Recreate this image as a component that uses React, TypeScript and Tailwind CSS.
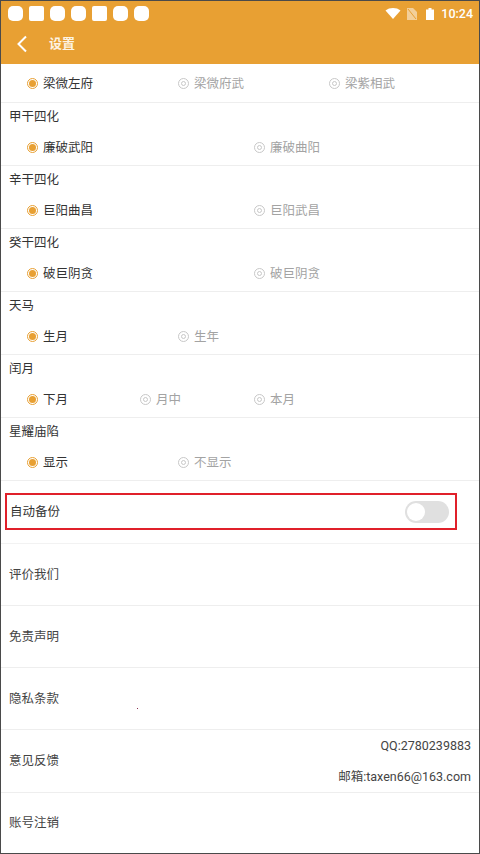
import React from "react";

function Radio({ label, on, w }: { label: string; on?: boolean; w: string }) {
  return (
    <div className={`flex items-center gap-[5px] shrink-0 ${w}`}>
      {on ? (
        <span className="flex items-center justify-center w-[11px] h-[11px] rounded-full border border-[#e8a033]">
          <span className="w-[7px] h-[7px] rounded-full bg-[#e8a033]" />
        </span>
      ) : (
        <span className="flex items-center justify-center w-[11px] h-[11px] rounded-full border border-[#c8c8c8]">
          <span className="w-[5px] h-[5px] rounded-full border border-[#c8c8c8]" />
        </span>
      )}
      <span className={`text-[12.5px] leading-[16px] pt-[2px] ${on ? "text-[#333333]" : "text-[#a3a3a3]"}`}>{label}</span>
    </div>
  );
}

function Options({ items }: { items: { l: string; w: string; on?: boolean }[] }) {
  return (
    <div className="flex items-center pl-[26px] h-[18px]">
      {items.map((i) => (
        <Radio key={i.l} label={i.l} on={i.on} w={i.w} />
      ))}
    </div>
  );
}

function Section({ title, items }: { title: string; items: { l: string; w: string; on?: boolean }[] }) {
  return (
    <div className="h-[63px] border-b border-[#eeeeee] flex flex-col">
      <div className="pl-[8px] pt-[6px] h-[35px] text-[12.5px] leading-[16px] text-[#333333]">{title}</div>
      <Options items={items} />
    </div>
  );
}

function Row({ title, tall, children }: { title: string; tall?: boolean; children?: React.ReactNode }) {
  return (
    <div className={`relative ${tall ? "h-[63px]" : "h-[62px]"} border-b border-[#eeeeee] flex items-center justify-between pl-[8px] pr-[8px]`}>
      <span className="text-[12.5px] leading-[16px] text-[#444444]">{title}</span>
      {children}
    </div>
  );
}

export default function App() {
  return (
    <div
      className="w-[480px] h-[854px] overflow-hidden bg-white flex flex-col border-x border-t border-b border-[#4a4a4a]"
      style={{ fontFamily: '"Roboto", "Noto Sans CJK SC", sans-serif' }}
    >
      <div className="h-[63px] shrink-0 bg-[#e8a033] flex flex-col">
        <div className="h-[22px] flex items-center justify-between pl-[7px] pr-[6px] pt-[3px]">
          <div className="flex items-center gap-[6px]">
            <span className="w-[15px] h-[15px] rounded-[5px] bg-white" />
            <span className="w-[15px] h-[15px] rounded-[2px] bg-white" />
            <span className="w-[15px] h-[15px] rounded-[5px] bg-white" />
            <span className="w-[15px] h-[15px] rounded-[5px] bg-white" />
            <span className="w-[15px] h-[15px] rounded-[2px] bg-white" />
            <span className="w-[15px] h-[15px] rounded-[5px] bg-white" />
            <span className="w-[15px] h-[15px] rounded-[5px] bg-white" />
          </div>
          <div className="flex items-center">
            <svg width="16" height="11" viewBox="0 0 15 11" className="mr-[6px]">
              <path d="M0 2.5C4 -0.8 11 -0.8 15 2.5L7.5 11Z" fill="#fff" />
            </svg>
            <svg width="10" height="12" viewBox="0 0 10 12" className="mr-[9px]">
              <path d="M0 0H6L10 4V12H0Z" fill="#f3cf99" />
              <path d="M1 1L9 11" stroke="#e8a033" strokeWidth="1" />
            </svg>
            <svg width="8" height="12" viewBox="0 0 8 12" className="mr-[7px]">
              <path d="M2.5 0H5.5V1.5H8V12H0V1.5H2.5Z" fill="#fff" />
            </svg>
            <span className="text-[12.5px] leading-[16px] font-medium text-white">10:24</span>
          </div>
        </div>
        <div className="flex-1 flex items-center pl-[15px]">
          <svg width="12" height="18" viewBox="0 0 12 18">
            <path d="M10 1.5L2.5 9L10 16.5" fill="none" stroke="#fff" strokeWidth="2" />
          </svg>
          <span className="ml-[21px] text-[13px] leading-[16px] font-bold text-[#fdf3e2]">设置</span>
        </div>
      </div>

      <div className="flex-1 flex flex-col">
        <div className="h-[39px] flex items-center border-b border-[#eeeeee]">
          <Options
            items={[
              { l: "梁微左府", w: "w-[151px]", on: true },
              { l: "梁微府武", w: "w-[151px]" },
              { l: "梁紫相武", w: "w-[100px]" },
            ]}
          />
        </div>
        <Section title="甲干四化" items={[{ l: "廉破武阳", w: "w-[227px]", on: true }, { l: "廉破曲阳", w: "w-[100px]" }]} />
        <Section title="辛干四化" items={[{ l: "巨阳曲昌", w: "w-[227px]", on: true }, { l: "巨阳武昌", w: "w-[100px]" }]} />
        <Section title="癸干四化" items={[{ l: "破巨阴贪", w: "w-[227px]", on: true }, { l: "破巨阴贪", w: "w-[100px]" }]} />
        <Section title="天马" items={[{ l: "生月", w: "w-[151px]", on: true }, { l: "生年", w: "w-[100px]" }]} />
        <Section
          title="闰月"
          items={[
            { l: "下月", w: "w-[113px]", on: true },
            { l: "月中", w: "w-[114px]" },
            { l: "本月", w: "w-[100px]" },
          ]}
        />
        <Section title="星耀庙陷" items={[{ l: "显示", w: "w-[151px]", on: true }, { l: "不显示", w: "w-[100px]" }]} />

        <div className="h-[63px] border-b border-[#f2f2f2] pl-[4px] pt-[12px]">
          <div className="w-[452px] h-[37px] border-2 border-[#e0202a] flex items-center justify-between pl-[3px] pr-[6px]">
            <span className="text-[12.5px] leading-[16px] text-[#333333]">自动备份</span>
            <span className="w-[44px] h-[22px] rounded-full bg-[#e0e0e0] flex items-center pl-[1px]">
              <span className="w-[18px] h-[18px] ml-[1px] rounded-full bg-white" />
            </span>
          </div>
        </div>

        <Row title="评价我们" />
        <Row title="免责声明" />
        <Row title="隐私条款">
          <span className="absolute left-[136px] top-[40px] w-px h-px bg-[#8a3050]" />
        </Row>
        <Row title="意见反馈" tall>
          <div className="flex flex-col items-end gap-[15px] text-[12.5px] leading-[16px] text-[#444444]">
            <span>QQ:2780239883</span>
            <span>邮箱:taxen66@163.com</span>
          </div>
        </Row>
        <div className="flex-1 flex items-center pl-[8px] text-[12.5px] leading-[16px] text-[#444444]">账号注销</div>
      </div>
    </div>
  );
}
